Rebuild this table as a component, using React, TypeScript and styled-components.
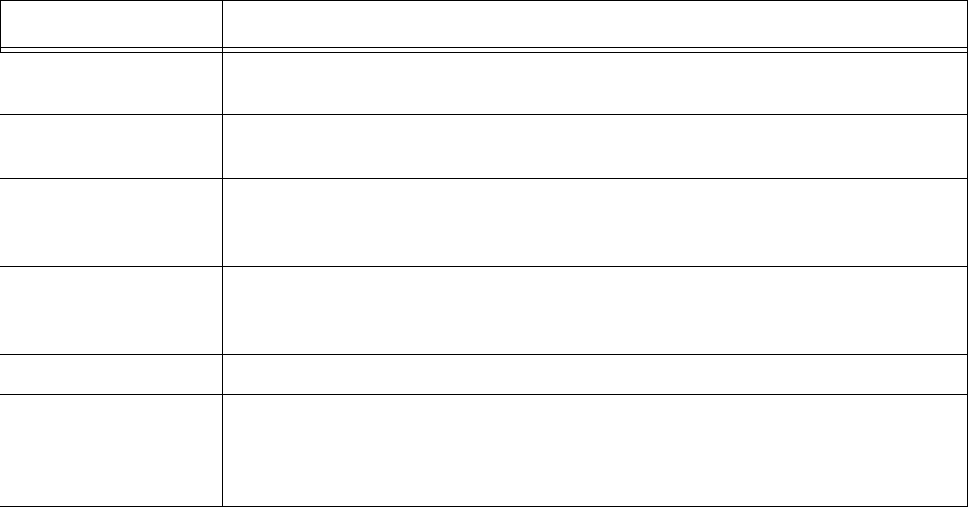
import React from "react";
import styled, { createGlobalStyle } from "styled-components";

const Global = createGlobalStyle`
  html, body { margin: 0; padding: 0; background: #ffffff; }
  * { box-sizing: border-box; }
  body { font-family: "Liberation Sans", Arial, sans-serif; font-size: 14px; color: #000; }
`;

const Table = styled.div`
  width: 968px;
  display: flex;
  flex-direction: column;
`;

const Row = styled.div<{ $h: number; $framed?: boolean; $top?: boolean }>`
  display: grid;
  grid-template-columns: ${(p) => (p.$framed ? "222px" : "223px")} 1fr;
  height: ${(p) => p.$h}px;
  border-right: 1px solid #000;
  border-bottom: 1px solid #000;
  border-left: ${(p) => (p.$framed ? "1px solid #000" : "none")};
  border-top: ${(p) => (p.$top ? "1px solid #000" : "none")};
`;

const Cell = styled.div<{ $first?: boolean }>`
  border-right: ${(p) => (p.$first ? "1px solid #000" : "none")};
  padding: 4px 8px;
`;

const rows = [62, 64, 88, 88, 40, 112];

export default function App() {
  return (
    <>
      <Global />
      <Table>
        <Row $h={48} $framed $top>
          <Cell $first />
          <Cell />
        </Row>
        <Row $h={5} $framed>
          <Cell $first />
          <Cell />
        </Row>
        {rows.map((h, i) => (
          <Row key={i} $h={h}>
            <Cell $first />
            <Cell />
          </Row>
        ))}
      </Table>
    </>
  );
}
